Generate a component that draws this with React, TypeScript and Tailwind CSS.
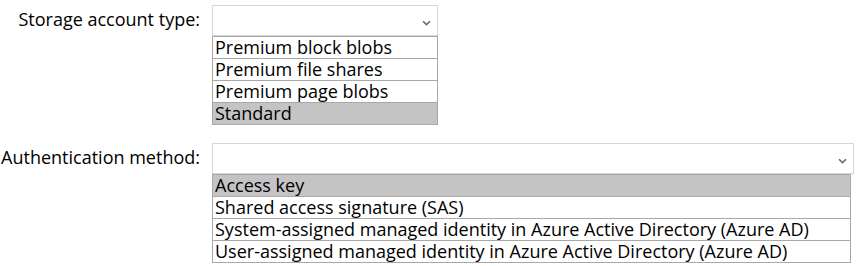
import React from 'react';

const Chevron: React.FC = () => (
  <svg width="9" height="6" viewBox="0 0 9 6" className="text-[#6b6b6b]">
    <path d="M1 1.2 L4.5 4.6 L8 1.2" fill="none" stroke="currentColor" strokeWidth="1.6" />
  </svg>
);

type DropProps = {
  label: string;
  width: string;
  listClass?: string;
  options: string[];
  selected: number;
};

const Dropdown: React.FC<DropProps> = ({ label, width, listClass = '', options, selected }) => (
  <div className="flex">
    <div className="w-[212px] shrink-0 pr-[12px] pt-[2px] text-right text-[18px] leading-[24px] text-black whitespace-nowrap">
      {label}
    </div>
    <div className={width}>
      <div className="flex h-[31px] items-center justify-end border border-[#d6d6d6] bg-white pr-[6px] pt-[5px]">
        <Chevron />
      </div>
      <div className={'border-x border-b border-[#a8a8a8] ' + listClass}>
        {options.map((opt, i) => (
          <div
            key={opt}
            className={
              'h-[22px] border-t border-[#a8a8a8] pl-[2px] text-[18px] leading-[20px] text-black whitespace-nowrap ' +
              (i === selected ? 'bg-[#c4c4c4]' : 'bg-white')
            }
          >
            {opt}
          </div>
        ))}
      </div>
    </div>
  </div>
);

const App: React.FC = () => {
  return (
    <div className="h-[266px] w-[856px] overflow-hidden bg-white pt-[5px] font-['Segoe_UI','Open_Sans',sans-serif]">
      <Dropdown
        label="Storage account type:"
        width="w-[226px]"
        options={['Premium block blobs', 'Premium file shares', 'Premium page blobs', 'Standard']}
        selected={3}
      />
      <div className="mt-[18px]">
        <Dropdown
          label="Authentication method:"
          width="w-[642px]"
          listClass="mr-[3px]"
          options={[
            'Access key',
            'Shared access signature (SAS)',
            'System-assigned managed identity in Azure Active Directory (Azure AD)',
            'User-assigned managed identity in Azure Active Directory (Azure AD)',
          ]}
          selected={0}
        />
      </div>
    </div>
  );
};

export default App;
